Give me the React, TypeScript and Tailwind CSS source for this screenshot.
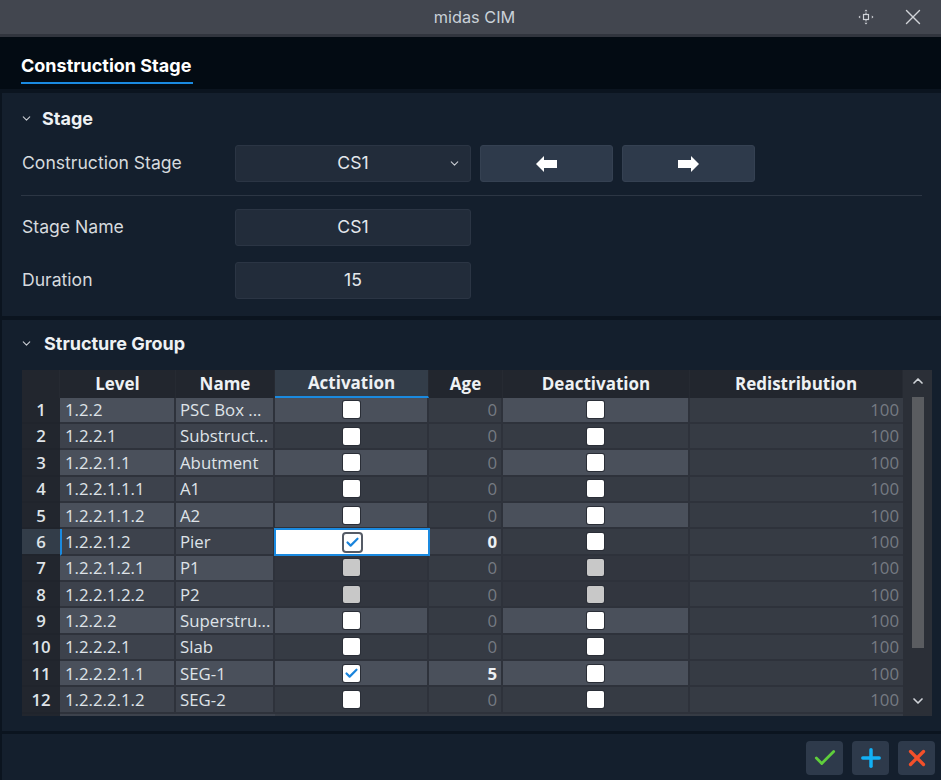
import { Check, ChevronDown, ChevronUp, Plus, X } from "lucide-react";

const font = { fontFamily: "Inter, sans-serif" };
const tableFont = { fontFamily: '"Open Sans", sans-serif' };

type Shade = "l" | "m" | "d" | "x";

const shades: Record<Shade, string> = {
  l: "bg-[#4a505b]",
  m: "bg-[#3d424c]",
  d: "bg-[#363b44]",
  x: "bg-[#32363f]",
};

const rows: {
  no: number;
  level: string;
  name: string;
  info: Shade;
  act: Shade;
  ageShade: Shade;
  age: number;
  checked?: boolean;
  disabled?: boolean;
  selected?: boolean;
}[] = [
  { no: 1, level: "1.2.2", name: "PSC Box ...", info: "l", act: "l", ageShade: "d", age: 0 },
  { no: 2, level: "1.2.2.1", name: "Substruct...", info: "m", act: "d", ageShade: "d", age: 0 },
  { no: 3, level: "1.2.2.1.1", name: "Abutment", info: "l", act: "l", ageShade: "d", age: 0 },
  { no: 4, level: "1.2.2.1.1.1", name: "A1", info: "m", act: "d", ageShade: "d", age: 0 },
  { no: 5, level: "1.2.2.1.1.2", name: "A2", info: "l", act: "l", ageShade: "d", age: 0 },
  { no: 6, level: "1.2.2.1.2", name: "Pier", info: "m", act: "d", ageShade: "m", age: 0, checked: true, selected: true },
  { no: 7, level: "1.2.2.1.2.1", name: "P1", info: "l", act: "x", ageShade: "d", age: 0, disabled: true },
  { no: 8, level: "1.2.2.1.2.2", name: "P2", info: "m", act: "x", ageShade: "d", age: 0, disabled: true },
  { no: 9, level: "1.2.2.2", name: "Superstru...", info: "l", act: "l", ageShade: "d", age: 0 },
  { no: 10, level: "1.2.2.2.1", name: "Slab", info: "m", act: "d", ageShade: "d", age: 0 },
  { no: 11, level: "1.2.2.2.1.1", name: "SEG-1", info: "l", act: "l", ageShade: "l", age: 5, checked: true },
  { no: 12, level: "1.2.2.2.1.2", name: "SEG-2", info: "m", act: "d", ageShade: "d", age: 0 },
];

function Box({ checked, disabled, ring }: { checked?: boolean; disabled?: boolean; ring?: boolean }) {
  return (
    <div
      className={`flex h-[17px] w-[17px] items-center justify-center rounded-[2px] ${disabled ? "bg-[#c8c8c8]" : "bg-white"} ${ring ? "ring-2 ring-[#555b66]" : "ring-1 ring-[#2a2e37]"}`}
    >
      {checked && <Check size={15} strokeWidth={3.5} className="text-[#1a84dc]" />}
    </div>
  );
}

function Field({ children, className = "" }: { children: React.ReactNode; className?: string }) {
  return (
    <div className={`flex h-[37px] items-center justify-center rounded-[3px] border border-[#2b3544] bg-[#222c3a] text-[17.6px] text-[#e4e8ec] ${className}`}>
      {children}
    </div>
  );
}

function SectionTitle({ children, className = "gap-[9px]" }: { children: React.ReactNode; className?: string }) {
  return (
    <div className={`flex items-center pl-[18px] ${className}`}>
      <ChevronDown size={13} className="text-[#c8ccd2]" />
      <span className="text-[18px] font-bold text-[#eef1f4]">{children}</span>
    </div>
  );
}

function HeaderCell({ children, active, className = "" }: { children?: React.ReactNode; active?: boolean; className?: string }) {
  return (
    <div
      className={`flex h-[27.5px] items-center justify-center border-r border-[#262a32] text-[17px] font-bold text-[#eef1f4] ${active ? "border-b-2 border-b-[#1a8ae0] bg-[#333d49]" : "bg-[#22262e]"} ${className}`}
    >
      {children}
    </div>
  );
}

function Row({ r }: { r: (typeof rows)[number] }) {
  const cell = "flex h-full items-center border-r-2 border-b-2 border-[#2e323b]";
  return (
    <div className="flex h-[26.37px] text-[16.8px] text-[#dfe3e8]">
      <div className={`flex h-full w-[38px] items-center justify-center border-b-2 border-[#20242c] font-semibold ${r.selected ? "bg-[#333d49]" : "bg-[#22262e]"}`}>
        {r.no}
      </div>
      <div className={`${cell} w-[116px] ${shades[r.info]} ${r.selected ? "border-l-2 border-l-[#1a8ae0] pl-[3px]" : "pl-[5px]"}`}>{r.level}</div>
      <div className={`${cell} w-[99px] pl-[4px] ${shades[r.info]}`}>{r.name}</div>
      {r.selected ? (
        <div className="z-10 flex h-[28px] w-[156px] -mx-px -mt-px shrink-0 items-center justify-center border-2 border-[#1a8ae0] bg-white">
          <Box checked ring />
        </div>
      ) : (
        <div className={`${cell} w-[154px] justify-center ${shades[r.act]}`}>
          <Box checked={r.checked} disabled={r.disabled} />
        </div>
      )}
      <div className={`${cell} w-[74px] justify-end pr-[4px] ${shades[r.ageShade]} ${r.age > 0 || r.selected ? "font-bold text-[#eef1f4]" : "text-[#757a82]"}`}>
        {r.age}
      </div>
      <div className={`${cell} w-[187px] justify-center ${r.selected ? shades.d : shades[r.act]}`}>
        <Box disabled={r.disabled} />
      </div>
      <div className="flex h-full w-[213px] items-center justify-end border-b-2 border-[#2e323b] bg-[#363b44] pr-[4px] text-[#757a82]">100</div>
    </div>
  );
}

export default function App() {
  return (
    <div style={font} className="flex h-[780px] w-[941px] flex-col overflow-hidden bg-[#0b141f]">
      {/* Title bar */}
      <div className="relative flex h-[37px] shrink-0 items-center justify-center border-b-[3px] border-[#31353e] bg-[#42464f] pl-[8px]">
        <span className="text-[16.3px] text-[#c9d0d8]">midas CIM</span>
        <div className="absolute right-[15px] top-[4px] flex items-center gap-[26px]">
          <svg width="16" height="16" viewBox="0 0 16 16" fill="none" className="text-[#d0d3d8]">
            <rect x="5.5" y="5.5" width="5" height="5" stroke="currentColor" strokeWidth="1.2" />
            <path d="M8 0.5 9.5 2.2H6.5ZM8 15.5 9.5 13.8H6.5ZM0.5 8 2.2 6.5V9.5ZM15.5 8 13.8 6.5V9.5Z" fill="currentColor" />
            <path d="M8 3.5V5M8 11v1.5" stroke="currentColor" strokeWidth="1" />
          </svg>
          <X size={26} strokeWidth={1.3} className="text-[#d0d3d8]" />
        </div>
      </div>

      {/* Tab bar */}
      <div className="flex h-[52px] shrink-0 items-end bg-[#030b13] pb-[5px] pl-[21px]">
        <div className="border-b-2 border-[#1a8ae0] pb-[3px] pr-[2px] text-[18px] font-bold leading-[26px] text-white">
          Construction Stage
        </div>
      </div>

      <div className="flex min-h-0 flex-1 flex-col pl-[2px]">
        {/* Stage */}
        <div className="mt-[4px] flex h-[223px] shrink-0 flex-col bg-[#141f2d] pt-[12px]">
          <SectionTitle>Stage</SectionTitle>
          <div className="mt-[13px] flex items-center pl-[20px]">
            <span className="w-[213px] text-[17.6px] text-[#d6dade]">Construction Stage</span>
            <Field className="relative w-[236px]">
              CS1
              <ChevronDown size={13} className="absolute right-[9px] text-[#c8ccd2]" />
            </Field>
            <button className="ml-[9px] flex h-[37px] w-[133px] items-center justify-center rounded-[3px] border border-[#354152] bg-[#2e3a4b]">
              <svg width="21" height="16" viewBox="0 0 21 16" fill="white"><path d="M0 8 8 0V4H21V12H8V16Z" /></svg>
            </button>
            <button className="ml-[9px] flex h-[37px] w-[133px] items-center justify-center rounded-[3px] border border-[#354152] bg-[#2e3a4b]">
              <svg width="21" height="16" viewBox="0 0 21 16" fill="white"><path d="M21 8 13 0V4H0V12H13V16Z" /></svg>
            </button>
          </div>
          <div className="mx-[19px] mt-[13px] h-px bg-[#2c3644]" />
          <div className="mt-[13px] flex items-center pl-[20px]">
            <span className="w-[213px] text-[17.6px] text-[#d6dade]">Stage Name</span>
            <Field className="w-[236px]">CS1</Field>
          </div>
          <div className="mt-[16px] flex items-center pl-[20px]">
            <span className="w-[213px] text-[17.6px] text-[#d6dade]">Duration</span>
            <Field className="w-[236px]">15</Field>
          </div>
        </div>

        {/* Structure Group */}
        <div className="mt-[4px] flex h-[411px] shrink-0 flex-col bg-[#141f2d] pt-[10px]">
          <SectionTitle className="gap-[11px]">Structure Group</SectionTitle>
          <div style={tableFont} className="ml-[20px] mt-[13px] flex h-[346px] w-[910px] overflow-hidden">
            <div className="w-[881px] shrink-0">
              <div className="flex">
                <HeaderCell className="w-[38px]" />
                <HeaderCell className="w-[116px]">Level</HeaderCell>
                <HeaderCell className="w-[99px]">Name</HeaderCell>
                <HeaderCell active className="w-[154px]">Activation</HeaderCell>
                <HeaderCell className="w-[74px]">Age</HeaderCell>
                <HeaderCell className="w-[187px]">Deactivation</HeaderCell>
                <HeaderCell className="w-[213px]">Redistribution</HeaderCell>
              </div>
              {rows.map((r) => (
                <Row key={r.no} r={r} />
              ))}
              <div className="flex h-[3px]">
                <div className="w-[38px] bg-[#22262e]" />
                <div className="w-[116px] bg-[#3d424c]" />
                <div className="w-[99px] bg-[#3d424c]" />
                <div className="w-[154px] bg-[#363b44]" />
                <div className="w-[74px] bg-[#363b44]" />
                <div className="w-[187px] bg-[#363b44]" />
                <div className="w-[213px] bg-[#363b44]" />
              </div>
            </div>
            {/* Scrollbar */}
            <div className="flex w-[29px] flex-col items-center bg-[#2b2f37] pt-[3px]">
              <ChevronUp size={16} strokeWidth={2.5} className="text-[#d0d3d8]" />
              <div className="mt-[8px] h-[251px] w-[12px] bg-[#5a5c60]" />
              <ChevronDown size={16} strokeWidth={2.5} className="mt-[45px] text-[#d0d3d8]" />
            </div>
          </div>
        </div>

        {/* Footer */}
        <div className="mt-[3px] flex flex-1 items-center justify-end gap-[9px] bg-[#141f2d] pr-[6px] pt-[2px]">
          <button className="flex h-[34px] w-[37px] items-center justify-center rounded-[4px] bg-[#2e3a4b]">
            <Check size={26} strokeWidth={2.6} className="text-[#5fce3c]" />
          </button>
          <button className="flex h-[34px] w-[37px] items-center justify-center rounded-[4px] bg-[#2e3a4b]">
            <Plus size={28} strokeWidth={3} className="text-[#12b0f5]" />
          </button>
          <button className="flex h-[34px] w-[37px] items-center justify-center rounded-[4px] bg-[#2e3a4b]">
            <X size={26} strokeWidth={3} className="text-[#f4502a]" />
          </button>
        </div>
      </div>
    </div>
  );
}
